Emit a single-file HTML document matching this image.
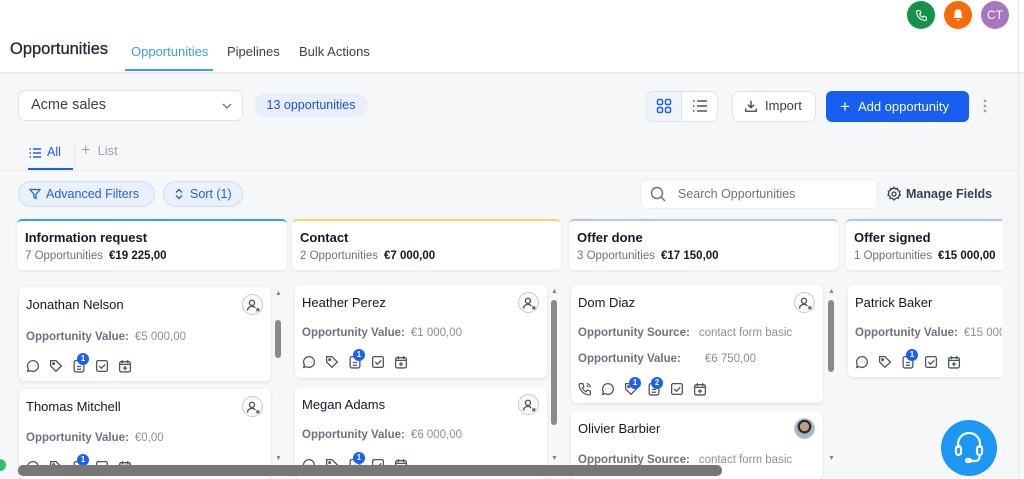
<!DOCTYPE html>
<html><head><meta charset="utf-8"><style>
*{box-sizing:border-box;margin:0;padding:0}
body{width:1024px;height:479px;overflow:hidden;background:#f6f7f9;font-family:"Liberation Sans",sans-serif;position:relative;color:#1f2937}
.a{position:absolute}
.hdr{left:0;top:0;width:1024px;height:73px;background:#fff;border-bottom:1px solid #e5e7eb;box-shadow:0 1px 2px rgba(0,0,0,.04)}
.circ{width:28px;height:28px;border-radius:50%;display:flex;align-items:center;justify-content:center;color:#fff;font-size:12px;font-weight:bold}
.box{background:#fff;border:1px solid #dfe3e8;border-radius:7px}
.colh{background:#fff;border-radius:5px;box-shadow:0 1px 3px rgba(0,0,0,.08);height:51px;top:219px}
.colh b{position:absolute;left:8px;top:9px;font-size:13px;color:#111827}
.colh span{position:absolute;left:8px;top:29px;font-size:11.5px;color:#6b7280}
.colh span i{font-style:normal;color:#111827;font-weight:bold;margin-left:6px}
.card{background:#fff;border-radius:6px;box-shadow:0 1px 3px rgba(0,0,0,.1);overflow:hidden}
.nm{position:absolute;left:7px;top:10px;font-size:13px;color:#111827}
.lb{position:absolute;left:7px;font-size:11.5px;color:#6b7280;font-weight:bold}
.lb i{font-style:normal;font-weight:normal;color:#8a9099;margin-left:6px}
.ux{position:absolute;right:8px;top:7px;width:21px;height:21px;border-radius:50%;border:1px solid #c5c9cf;background:#f9fafb}
.ics{position:absolute;left:7px;display:flex;gap:9px}
.ics svg{width:14px;height:14px}
.bd{position:absolute;width:12px;height:12px;border-radius:50%;background:#1d5ff0;color:#fff;font-size:8px;font-weight:bold;text-align:center;line-height:12px}
.sb{width:6px;background:#8a8a8a;border-radius:3px}
.ar{font-size:7px;color:#888}
</style></head><body>
<div class="a hdr"></div>
<div class="a" style="left:10px;top:40px;font-size:16.5px;color:#1f2937;-webkit-text-stroke:.3px #1f2937">Opportunities</div>
<div class="a" style="left:131px;top:44px;font-size:13px;color:#3b9fe0">Opportunities</div>
<div class="a" style="left:125px;top:69px;width:88px;height:2px;background:#3b9fe0"></div>
<div class="a" style="left:227px;top:44px;font-size:13px;color:#374151">Pipelines</div>
<div class="a" style="left:299px;top:44px;font-size:13px;color:#374151">Bulk Actions</div>
<div class="a circ" style="left:907px;top:1px;background:#14924a"><svg width="13" height="13" viewBox="0 0 24 24" fill="none" stroke="#fff" stroke-width="2"><path d="M5 3h4l2 5-2.5 1.5a11 11 0 0 0 6 6L16 13l5 2v4a2 2 0 0 1-2 2A16 16 0 0 1 3 5a2 2 0 0 1 2-2"/></svg></div>
<div class="a circ" style="left:944px;top:1px;background:#fb6a0a"><svg width="14" height="14" viewBox="0 0 24 24" fill="#fff"><path d="M12 2a6 6 0 0 0-6 6v5l-2 4h16l-2-4V8a6 6 0 0 0-6-6zM9.5 19a2.5 2.5 0 0 0 5 0z"/></svg></div>
<div class="a circ" style="left:981px;top:1px;background:#a776c0;font-weight:normal">CT</div>
<div class="a" style="left:1018px;top:0;width:1px;height:479px;background:#e5e7eb"></div>

<div class="a box" style="left:18px;top:90px;width:225px;height:31px"></div>
<div class="a" style="left:31px;top:97px;font-size:14.5px;color:#374151">Acme sales</div>
<svg class="a" style="left:221px;top:100px" width="12" height="12" viewBox="0 0 12 12" fill="none" stroke="#6b7280" stroke-width="1.3"><path d="M2 4l4 4 4-4"/></svg>
<div class="a" style="left:254px;top:93px;width:114px;height:24px;border-radius:12px;background:#e8effb;color:#1d4ed8;font-size:12.5px;text-align:center;line-height:24px">13 opportunities</div>

<div class="a box" style="left:646px;top:91px;width:72px;height:31px;overflow:hidden"><div style="position:absolute;left:0;top:0;width:35px;height:31px;background:#eef3fc;border-right:1px solid #dfe3e8"></div></div>
<svg class="a" style="left:656px;top:98px" width="16" height="16" viewBox="0 0 16 16" fill="none" stroke="#1d5ff0" stroke-width="1.5"><rect x="1.5" y="1.5" width="5" height="5" rx="1.5"/><rect x="9.5" y="1.5" width="5" height="5" rx="1.5"/><rect x="1.5" y="9.5" width="5" height="5" rx="1.5"/><rect x="9.5" y="9.5" width="5" height="5" rx="1.5"/></svg>
<svg class="a" style="left:692px;top:98px" width="16" height="16" viewBox="0 0 16 16" fill="none" stroke="#4b5563" stroke-width="1.6"><path d="M5 3h10M5 8h10M5 13h10M1 3h1.5M1 8h1.5M1 13h1.5"/></svg>
<div class="a box" style="left:732px;top:91px;width:84px;height:31px"></div>
<svg class="a" style="left:744px;top:99px" width="14" height="14" viewBox="0 0 16 16" fill="none" stroke="#374151" stroke-width="1.5"><path d="M8 2v8M4.5 6.5 8 10l3.5-3.5M2 11v3h12v-3"/></svg>
<div class="a" style="left:765px;top:98px;font-size:13px;color:#374151">Import</div>
<div class="a" style="left:826px;top:91px;width:143px;height:31px;background:#155eef;border-radius:6px;color:#fff;font-size:13px;line-height:31px;padding-left:14px"><span style="font-size:17px;vertical-align:-1px;margin-right:8px">+</span>Add opportunity</div>
<svg class="a" style="left:982px;top:98px" width="6" height="16" viewBox="0 0 6 16" fill="#9ca3af"><circle cx="3" cy="3" r="1.4"/><circle cx="3" cy="8" r="1.4"/><circle cx="3" cy="13" r="1.4"/></svg>

<svg class="a" style="left:29px;top:147px" width="12" height="12" viewBox="0 0 12 12" fill="none" stroke="#1d5ff0" stroke-width="1.4"><path d="M4 2h8M4 6h8M4 10h8M0.5 2h1.5M0.5 6h1.5M0.5 10h1.5"/></svg>
<div class="a" style="left:47px;top:145px;font-size:12.5px;color:#1d5ff0">All</div>
<div class="a" style="left:28px;top:168px;width:45px;height:2px;background:#1d5ff0"></div>
<div class="a" style="left:74px;top:140px;width:1px;height:28px;background:#e5e7eb"></div>
<div class="a" style="left:81px;top:142px;font-size:13px;color:#9ca3af"><span style="font-size:16px">+</span>&nbsp; List</div>
<div class="a" style="left:0;top:170px;width:1018px;height:1px;background:#e9ebee"></div>

<div class="a" style="left:18px;top:181px;width:137px;height:26px;border-radius:13px;background:#eaf1fd;border:1px solid #cdddf8;color:#1d5ff0;font-size:12.5px;line-height:24px;padding-left:27px">Advanced Filters</div>
<svg class="a" style="left:29px;top:188px" width="12" height="12" viewBox="0 0 12 12" fill="none" stroke="#1d5ff0" stroke-width="1.3"><path d="M1 1.5h10L7 6.5v4L5 9.5v-3z"/></svg>
<div class="a" style="left:163px;top:181px;width:80px;height:26px;border-radius:13px;background:#eaf1fd;border:1px solid #cdddf8;color:#1d5ff0;font-size:12.5px;line-height:24px;padding-left:26px">Sort (1)</div>
<svg class="a" style="left:174px;top:188px" width="10" height="12" viewBox="0 0 10 12" fill="none" stroke="#1d5ff0" stroke-width="1.4"><path d="M2 4.5 5 1.5l3 3M2 7.5l3 3 3-3"/></svg>

<div class="a box" style="left:640px;top:179px;width:238px;height:30px;border-color:#eceef1"></div>
<svg class="a" style="left:650px;top:186px" width="16" height="16" viewBox="0 0 16 16" fill="none" stroke="#6b7280" stroke-width="1.4"><circle cx="7" cy="7" r="5.5"/><path d="M11 11l4 4"/></svg>
<div class="a" style="left:678px;top:187px;font-size:12.5px;color:#6b7280">Search Opportunities</div>
<svg class="a" style="left:886px;top:186px" width="16" height="16" viewBox="0 0 24 24" fill="none" stroke="#374151" stroke-width="2"><circle cx="12" cy="12" r="3"/><path d="M12 2l2 2.5 3-.8.8 3L21 8l-1 3 1.5 2.5L19 15l-.3 3.2-3.2-.2L12 21l-2.5-2.6-3.2.3L6 15.4 3 13.5 4.3 11 3.5 8l3-1.2.5-3 3 .6z"/></svg>
<div class="a" style="left:906px;top:187px;font-size:12.5px;color:#374151;font-weight:bold">Manage Fields</div>

<div class="a colh" style="left:17px;width:270px;border-top:2px solid #2ea3f2"><b>Information request</b><span>7 Opportunities<i>€19 225,00</i></span></div>
<div class="a colh" style="left:292px;width:269px;border-top:2px solid #fbd26a"><b>Contact</b><span>2 Opportunities<i>€7 000,00</i></span></div>
<div class="a colh" style="left:569px;width:269px;border-top:2px solid #b8c2f0"><b>Offer done</b><span>3 Opportunities<i>€17 150,00</i></span></div>
<div class="a colh" style="left:846px;width:160px;border-top:2px solid #aac4f7"><b>Offer signed</b><span>1 Opportunities<i>€15 000,00</i></span></div>

<svg width="0" height="0" style="position:absolute"><defs>
<g id="chat" fill="none" stroke="#4b5563" stroke-width="1.2"><path d="M6.5 1.5a5 5 0 1 1-2.6 9.3L1.5 11.5l.7-2.4A5 5 0 0 1 6.5 1.5z"/><path d="M4.3 6.5h.3M6.4 6.5h.3M8.5 6.5h.3"/></g>
<g id="tag" fill="none" stroke="#4b5563" stroke-width="1.2"><path d="M1.5 1.5h5l5 5-5 5-5-5z"/><circle cx="4.3" cy="4.3" r=".8"/></g>
<g id="note" fill="none" stroke="#4b5563" stroke-width="1.2"><rect x="2" y="1.5" width="9" height="10.5" rx="1.5"/><path d="M4.5 7h4M4.5 9.5h4"/></g>
<g id="chk" fill="none" stroke="#4b5563" stroke-width="1.2"><rect x="1.5" y="1.5" width="10" height="10" rx="1.5"/><path d="M4 6.5l2 2 3.5-3.5"/></g>
<g id="cal" fill="none" stroke="#4b5563" stroke-width="1.2"><rect x="1.5" y="2.5" width="10" height="9.5" rx="1.5"/><path d="M4 1v3M9 1v3M1.5 5h10M6.5 6.5v4M4.5 8.5h4"/></g>
<g id="ph" fill="none" stroke="#4b5563" stroke-width="1.1"><path d="M2 1.5h2.5l1 3-1.5 1a7 7 0 0 0 3.5 3.5l1-1.5 3 1V11a1 1 0 0 1-1 1A10 10 0 0 1 1 2.5a1 1 0 0 1 1-1z"/><path d="M8 1.5a3.5 3.5 0 0 1 3.5 3.5M8 3.5A1.5 1.5 0 0 1 9.5 5"/></g>
<g id="usr" fill="none" stroke="#4b5563" stroke-width="1.2"><circle cx="6" cy="5" r="2.3"/><path d="M2 12a4 4 0 0 1 7-2.5M10 10l2.5 2.5M12.5 10 10 12.5"/></g>
</defs></svg>

<div class="a card" style="left:19px;top:287px;width:252px;height:94px">
<div class="nm" style="top:10px">Jonathan Nelson</div><div class="ux"><svg width="19" height="19" viewBox="-2 -2 17 17"><use href="#usr"/></svg></div>
<div class="lb" style="top:44px">Opportunity Value:<i>€5 000,00</i></div>
<div class="ics" style="top:72px"><svg viewBox="0 0 13 13"><use href="#chat"/></svg><svg viewBox="0 0 13 13"><use href="#tag"/></svg><svg viewBox="0 0 13 13"><use href="#note"/></svg><svg viewBox="0 0 13 13"><use href="#chk"/></svg><svg viewBox="0 0 13 13"><use href="#cal"/></svg></div>
<div class="bd" style="left:58px;top:66px">1</div></div>
<div class="a card" style="left:19px;top:389px;width:252px;height:90px">
<div class="nm">Thomas Mitchell</div><div class="ux"><svg width="19" height="19" viewBox="-2 -2 17 17"><use href="#usr"/></svg></div>
<div class="lb" style="top:43px">Opportunity Value:<i>€0,00</i></div>
<div class="ics" style="top:71px"><svg viewBox="0 0 13 13"><use href="#chat"/></svg><svg viewBox="0 0 13 13"><use href="#tag"/></svg><svg viewBox="0 0 13 13"><use href="#note"/></svg><svg viewBox="0 0 13 13"><use href="#chk"/></svg><svg viewBox="0 0 13 13"><use href="#cal"/></svg></div>
<div class="bd" style="left:58px;top:65px">1</div></div>
<div class="a ar" style="left:275px;top:290px">▲</div><div class="a sb" style="left:275px;top:320px;height:38px"></div><div class="a ar" style="left:275px;top:455px">▼</div>

<div class="a card" style="left:295px;top:285px;width:252px;height:93px">
<div class="nm">Heather Perez</div><div class="ux"><svg width="19" height="19" viewBox="-2 -2 17 17"><use href="#usr"/></svg></div>
<div class="lb" style="top:42px">Opportunity Value:<i>€1 000,00</i></div>
<div class="ics" style="top:70px"><svg viewBox="0 0 13 13"><use href="#chat"/></svg><svg viewBox="0 0 13 13"><use href="#tag"/></svg><svg viewBox="0 0 13 13"><use href="#note"/></svg><svg viewBox="0 0 13 13"><use href="#chk"/></svg><svg viewBox="0 0 13 13"><use href="#cal"/></svg></div>
<div class="bd" style="left:58px;top:64px">1</div></div>
<div class="a card" style="left:295px;top:387px;width:252px;height:92px">
<div class="nm">Megan Adams</div><div class="ux"><svg width="19" height="19" viewBox="-2 -2 17 17"><use href="#usr"/></svg></div>
<div class="lb" style="top:42px">Opportunity Value:<i>€6 000,00</i></div>
<div class="ics" style="top:71px"><svg viewBox="0 0 13 13"><use href="#chat"/></svg><svg viewBox="0 0 13 13"><use href="#tag"/></svg><svg viewBox="0 0 13 13"><use href="#note"/></svg><svg viewBox="0 0 13 13"><use href="#chk"/></svg><svg viewBox="0 0 13 13"><use href="#cal"/></svg></div>
<div class="bd" style="left:58px;top:65px">1</div></div>
<div class="a ar" style="left:551px;top:288px">▲</div><div class="a sb" style="left:551px;top:300px;height:125px"></div><div class="a ar" style="left:551px;top:455px">▼</div>

<div class="a card" style="left:571px;top:285px;width:252px;height:118px">
<div class="nm">Dom Diaz</div><div class="ux"><svg width="19" height="19" viewBox="-2 -2 17 17"><use href="#usr"/></svg></div>
<div class="lb" style="top:42px">Opportunity Source:<i style="margin-left:9px">contact form basic</i></div>
<div class="lb" style="top:68px">Opportunity Value:<i style="margin-left:24px">€6 750,00</i></div>
<div class="ics" style="top:97px"><svg viewBox="0 0 13 13"><use href="#ph"/></svg><svg viewBox="0 0 13 13"><use href="#chat"/></svg><svg viewBox="0 0 13 13"><use href="#tag"/></svg><svg viewBox="0 0 13 13"><use href="#note"/></svg><svg viewBox="0 0 13 13"><use href="#chk"/></svg><svg viewBox="0 0 13 13"><use href="#cal"/></svg></div>
<div class="bd" style="left:58px;top:92px">1</div><div class="bd" style="left:80px;top:92px">2</div></div>
<div class="a card" style="left:571px;top:411px;width:252px;height:68px">
<div class="nm">Olivier Barbier</div>
<div style="position:absolute;right:8px;top:7px;width:21px;height:21px;border-radius:50%;background:radial-gradient(circle at 50% 40%,#c99a7a 0 30%,#2b2b2b 32% 45%,#9fb6d3 47%);border:1px solid #c5c9cf"></div>
<div class="lb" style="top:43px">Opportunity Source:<i style="margin-left:9px">contact form basic</i></div></div>
<div class="a ar" style="left:828px;top:288px">▲</div><div class="a sb" style="left:828px;top:300px;height:72px"></div><div class="a ar" style="left:828px;top:455px">▼</div>

<div class="a card" style="left:848px;top:285px;width:160px;height:92px;border-radius:6px 0 0 6px">
<div class="nm">Patrick Baker</div>
<div class="lb" style="top:42px;white-space:nowrap">Opportunity Value:<i>€15 000,</i></div>
<div class="ics" style="top:70px"><svg viewBox="0 0 13 13"><use href="#chat"/></svg><svg viewBox="0 0 13 13"><use href="#tag"/></svg><svg viewBox="0 0 13 13"><use href="#note"/></svg><svg viewBox="0 0 13 13"><use href="#chk"/></svg><svg viewBox="0 0 13 13"><use href="#cal"/></svg></div>
<div class="bd" style="left:58px;top:64px">1</div></div>
<div class="a" style="left:1002px;top:215px;width:16px;height:264px;background:#f6f7f9"></div>

<div class="a" style="left:18px;top:465px;width:704px;height:11px;border-radius:5px;background:#777"></div>
<div class="a" style="left:-6px;top:459px;width:12px;height:12px;border-radius:50%;background:#2fbf71"></div>
<div class="a" style="left:941px;top:420px;width:56px;height:56px;border-radius:50%;background:#1c98f4"></div>
<svg class="a" style="left:953px;top:430px" width="32" height="34" viewBox="0 0 32 34" fill="none" stroke="#fff" stroke-width="2.2"><path d="M5 18v-4a11 11 0 0 1 22 0v4"/><rect x="3" y="16" width="5" height="9" rx="2.5"/><rect x="24" y="16" width="5" height="9" rx="2.5"/><path d="M26.5 25v2a4 4 0 0 1-4 4H17"/><rect x="13" y="29" width="5" height="3" rx="1.5" fill="#fff"/></svg>
</body></html>
